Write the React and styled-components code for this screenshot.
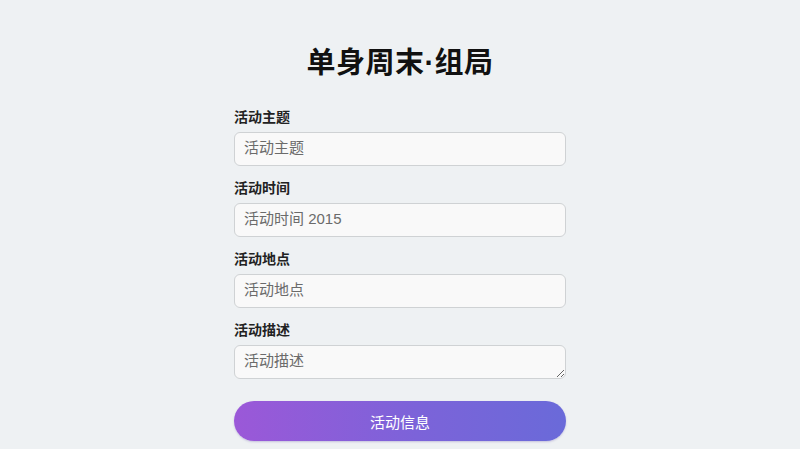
import React from "react";
import styled, { createGlobalStyle } from "styled-components";

const Global = createGlobalStyle`
  html, body { margin: 0; padding: 0; background: #eef1f3; }
  body { font-family: "Noto Sans CJK SC", "Noto Sans", sans-serif; }
  * { box-sizing: border-box; }
`;

const Page = styled.div`
  min-height: 449px;
  display: flex;
  flex-direction: column;
  align-items: center;
  padding-top: 44px;
`;

const Title = styled.h1`
  margin: 0 0 24px;
  font-family: "Liberation Sans", "Noto Sans CJK SC", sans-serif;
  font-size: 29px;
  line-height: 38px;
  font-weight: 700;
  color: #111;
  letter-spacing: 0.5px;
`;

const Form = styled.form`
  width: 332px;
  display: flex;
  flex-direction: column;
`;

const Field = styled.div`
  display: flex;
  flex-direction: column;
  gap: 6px;
  margin-bottom: 11px;
`;

const Label = styled.label`
  font-size: 14px;
  line-height: 20px;
  font-weight: 700;
  color: #222;
`;

const inputStyles = `
  width: 100%;
  height: 34px;
  padding: 0 9px;
  border: 1px solid #cfd2d4;
  border-radius: 6px;
  background: #f9f9f9;
  font-family: "Liberation Sans", "Noto Sans CJK SC", sans-serif;
  font-size: 15px;
  color: #333;
  outline: none;
  &::placeholder { color: #6b6b6b; }
`;

const Input = styled.input`
  ${inputStyles}
  padding-bottom: 3px;
`;

const TextArea = styled.textarea`
  ${inputStyles}
  display: block;
  padding: 4px 9px;
  line-height: 22px;
  resize: vertical;
`;

const Button = styled.button`
  margin-top: 11px;
  height: 40px;
  border: none;
  border-radius: 20px;
  background: linear-gradient(90deg, #9b58d8 0%, #7c63d9 55%, #6a6ad9 100%);
  color: #fff;
  font-family: "Noto Sans CJK SC", "Noto Sans", sans-serif;
  font-size: 15px;
  cursor: pointer;
  box-shadow: 0 1px 2px rgba(80, 60, 160, 0.25);
`;

const fields = [
  { label: "活动主题", placeholder: "活动主题" },
  { label: "活动时间", placeholder: "活动时间 2015" },
  { label: "活动地点", placeholder: "活动地点" },
];

export default function App() {
  return (
    <>
      <Global />
      <Page>
        <Title>单身周末·组局</Title>
        <Form onSubmit={(e) => e.preventDefault()}>
          {fields.map((f) => (
            <Field key={f.label}>
              <Label>{f.label}</Label>
              <Input placeholder={f.placeholder} />
            </Field>
          ))}
          <Field>
            <Label>活动描述</Label>
            <TextArea rows={1} placeholder="活动描述" />
          </Field>
          <Button type="submit">活动信息</Button>
        </Form>
      </Page>
    </>
  );
}
